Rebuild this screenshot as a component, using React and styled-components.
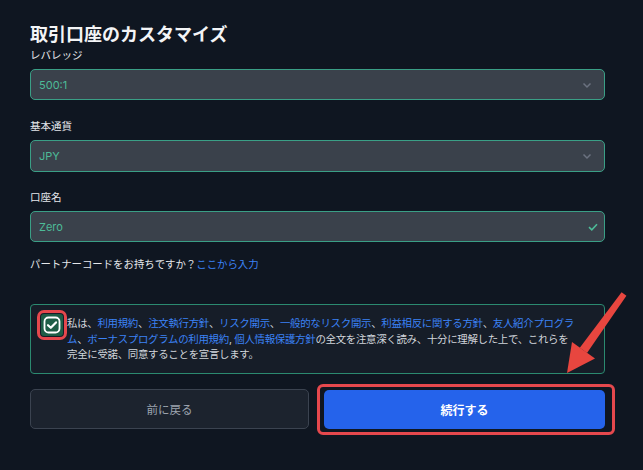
import React from "react"
import styled, { createGlobalStyle } from "styled-components"

const GlobalStyle = createGlobalStyle`
  body {
    margin: 0;
    background: #0f1621;
    font-family: Inter, "Noto Sans CJK JP", sans-serif;
  }
`

const Page = styled.div`
  position: relative;
  width: 643px;
  height: 470px;
  overflow: hidden;
  background: #0f1621;
  color: #e5e7eb;
`

const Form = styled.div`
  display: flex;
  flex-direction: column;
  width: 575px;
  padding: 22px 0 0 30px;
`

const Title = styled.h1`
  margin: 0;
  font-size: 18px;
  line-height: 26px;
  font-weight: 700;
  color: #f3f4f6;
`

const Label = styled.div`
  font-size: 10.5px;
  line-height: 16px;
  color: #e5e7eb;
  margin-top: ${p => p.$gap || 0}px;
  margin-bottom: 5px;
`

const Field = styled.div`
  display: flex;
  align-items: center;
  justify-content: space-between;
  height: ${p => p.$h || 32}px;
  box-sizing: border-box;
  padding: 0 12px 0 8px;
  background: #3a414b;
  border: 1px solid #3a9f86;
  border-radius: 5px;
  font-size: 11px;
  color: #4dbb98;
`

const Partner = styled.div`
  margin-top: 15px;
  font-size: 10.4px;
  line-height: 16px;
  color: #e5e7eb;
`

const Link = styled.span`
  color: #3b82f6;
`

const Agreement = styled.div`
  display: flex;
  align-items: flex-start;
  gap: 4px;
  margin-top: 31px;
  padding: 11px 10px 12px 10px;
  box-sizing: border-box;
  height: 70px;
  background: #161d28;
  border: 1px solid #2b8a70;
  border-radius: 4px;
`

const Check = styled.div`
  flex: none;
  width: 22px;
  height: 22px;
  margin-top: -2px;
  outline: 3px solid #e5484d;
  outline-offset: 1px;
  border-radius: 3px;
`

const AgreeText = styled.div`
  font-size: 10.45px;
  line-height: 15.5px;
  letter-spacing: -0.3px;
  color: #d1d5db;
  white-space: nowrap;
`

const Buttons = styled.div`
  display: grid;
  grid-template-columns: 279px 281px;
  gap: 15px;
  margin-top: 15px;
  align-items: center;
`

const BackButton = styled.div`
  display: flex;
  align-items: center;
  justify-content: center;
  height: 40px;
  box-sizing: border-box;
  background: #1c232e;
  border: 1px solid #3b4350;
  border-radius: 5px;
  font-size: 11.5px;
  color: #9ca3af;
`

const Highlight = styled.div`
  margin: -6px -10px -6px -7px;
  padding: 3px 7px 3px 4px;
  border: 3px solid #e5484d;
  border-radius: 6px;
`

const NextButton = styled.div`
  display: flex;
  align-items: center;
  justify-content: center;
  height: 39px;
  background: #2563eb;
  border-radius: 5px;
  font-size: 12px;
  font-weight: 700;
  color: #ffffff;
`

const Arrow = styled.svg`
  position: absolute;
  left: 0;
  top: 0;
  pointer-events: none;
`

const Chevron = () => (
  <svg width="10" height="8" viewBox="0 0 10 8">
    <path d="M1.5 2.5 L5 6 L8.5 2.5" fill="none" stroke="#6b7280" strokeWidth="1.5" />
  </svg>
)

const Tick = () => (
  <svg width="10" height="8" viewBox="0 0 10 8" style={{ marginRight: -6 }}>
    <path d="M1 4.2 L3.8 6.8 L9 1.2" fill="none" stroke="#4dbb98" strokeWidth="1.6" />
  </svg>
)

const CheckIcon = () => (
  <svg width="22" height="22" viewBox="0 0 22 22">
    <rect x="0" y="0" width="22" height="22" rx="3" fill="#1e5d46" />
    <rect x="3.5" y="3.5" width="15" height="15" rx="4" fill="none" stroke="#ffffff" strokeWidth="1.8" />
    <path d="M7 11.2 L9.8 13.8 L15 8.4" fill="none" stroke="#ffffff" strokeWidth="2.2" strokeLinecap="round" strokeLinejoin="round" />
  </svg>
)

export default function App() {
  return (
    <Page>
      <GlobalStyle />
      <Form>
        <Title>取引口座のカスタマイズ</Title>
        <Label>レバレッジ</Label>
        <Field $h={31}>
          500:1
          <Chevron />
        </Field>
        <Label $gap={19}>基本通貨</Label>
        <Field>
          JPY
          <Chevron />
        </Field>
        <Label $gap={18}>口座名</Label>
        <Field $h={31}>
          Zero
          <Tick />
        </Field>
        <Partner>
          パートナーコードをお持ちですか？<Link>ここから入力</Link>
        </Partner>
        <Agreement>
          <Check>
            <CheckIcon />
          </Check>
          <AgreeText>
            私は、<Link>利用規約</Link>、<Link>注文執行方針</Link>、<Link>リスク開示</Link>、
            <Link>一般的なリスク開示</Link>、<Link>利益相反に関する方針</Link>、
            <Link>友人紹介プログラ<br />ム</Link>、<Link>ボーナスプログラムの利用規約</Link>,{" "}
            <Link>個人情報保護方針</Link>の全文を注意深く読み、十分に理解した上で、これらを
            <br />
            完全に受諾、同意することを宣言します。
          </AgreeText>
        </Agreement>
        <Buttons>
          <BackButton>前に戻る</BackButton>
          <Highlight>
            <NextButton>続行する</NextButton>
          </Highlight>
        </Buttons>
      </Form>
      <Arrow width="643" height="470" viewBox="0 0 643 470">
        <polygon points="626.4,295.8 621.6,292.2 579.8,347.7 587,353" fill="#e8463f" />
        <polygon points="567,373 572,342 595,358.5" fill="#e8463f" />
      </Arrow>
    </Page>
  )
}
